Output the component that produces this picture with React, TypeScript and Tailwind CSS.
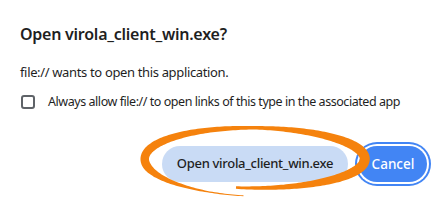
import React from "react";

function buildLoop(): string {
  const cx = 255;
  const cy = 159;
  const N = 260;
  const th0 = (100 * Math.PI) / 180;
  const th1 = (-264 * Math.PI) / 180;
  const pts: { x: number; y: number; w: number }[] = [];
  for (let i = 0; i <= N; i++) {
    const t = i / N;
    const th = th0 + (th1 - th0) * t;
    const rx = 109.5 + 1 * t;
    const ry = 29 + 8 * t * t;
    const x = cx + rx * Math.cos(th);
    const y = cy + ry * Math.sin(th);
    const c = Math.cos(th);
    const amp = c > 0 ? 6.5 : 5;
    let w = 3.5 + amp * Math.pow(Math.abs(c), 1.2);
    if (t > 0.8) w *= Math.max(0.25, (1 - t) / 0.2);
    if (t < 0.03) w *= 0.6 + 0.4 * (t / 0.03);
    pts.push({ x, y, w });
  }
  const left: string[] = [];
  const right: string[] = [];
  for (let i = 0; i <= N; i++) {
    const a = pts[Math.max(0, i - 1)];
    const b = pts[Math.min(N, i + 1)];
    let dx = b.x - a.x;
    let dy = b.y - a.y;
    const len = Math.hypot(dx, dy) || 1;
    dx /= len;
    dy /= len;
    const nx = -dy;
    const ny = dx;
    const p = pts[i];
    const h = p.w / 2;
    left.push(`${(p.x + nx * h).toFixed(2)},${(p.y + ny * h).toFixed(2)}`);
    right.push(`${(p.x - nx * h).toFixed(2)},${(p.y - ny * h).toFixed(2)}`);
  }
  return "M" + left.join(" L") + " L" + right.reverse().join(" L") + " Z";
}

export default function App() {
  const d = buildLoop();
  return (
    <div
      className="relative w-[448px] h-[204px] bg-white overflow-hidden"
      style={{ fontFamily: '"Noto Sans", "Open Sans", sans-serif' }}
    >
      <div className="flex flex-col pl-[20px] pr-[21px] pt-[22px]">
        <h1 className="text-[16px] leading-[24px] font-semibold tracking-[-0.25px] text-[#1f1f1f]">
          Open virola_client_win.exe?
        </h1>
        <p className="mt-[16px] text-[13px] leading-[20px] tracking-[-0.35px] text-[#1f1f1f]">
          file:// wants to open this application.
        </p>
        <label className="mt-[10px] flex items-center h-[20px] text-[12.5px] leading-[20px] tracking-[-0.45px] text-[#1f1f1f] whitespace-nowrap">
          <span className="ml-[1px] w-[14px] h-[14px] rounded-[3px] border-2 border-[#5f6368] bg-white shrink-0" />
          <span className="ml-[13px]">
            Always allow file:// to open links of this type in the associated app
          </span>
        </label>
        <div className="mt-[34px] flex justify-end items-center gap-[11px]">
          <button className="w-[186px] h-[36px] rounded-full bg-[#c9dbf5] text-[13px] font-medium tracking-[-0.3px] text-[#1f1f1f] flex items-center justify-center">
            Open virola_client_win.exe
          </button>
          <button className="w-[68px] h-[36px] rounded-full bg-[#4285f4] text-[13.5px] font-medium text-white ring-2 ring-[#4285f4] ring-offset-2 ring-offset-white flex items-center justify-center">
            Cancel
          </button>
        </div>
      </div>
      <svg
        className="absolute inset-0 pointer-events-none"
        width={448}
        height={204}
        viewBox="0 0 448 204"
      >
        <path d={d} fill="#f5820d" />
      </svg>
    </div>
  );
}
